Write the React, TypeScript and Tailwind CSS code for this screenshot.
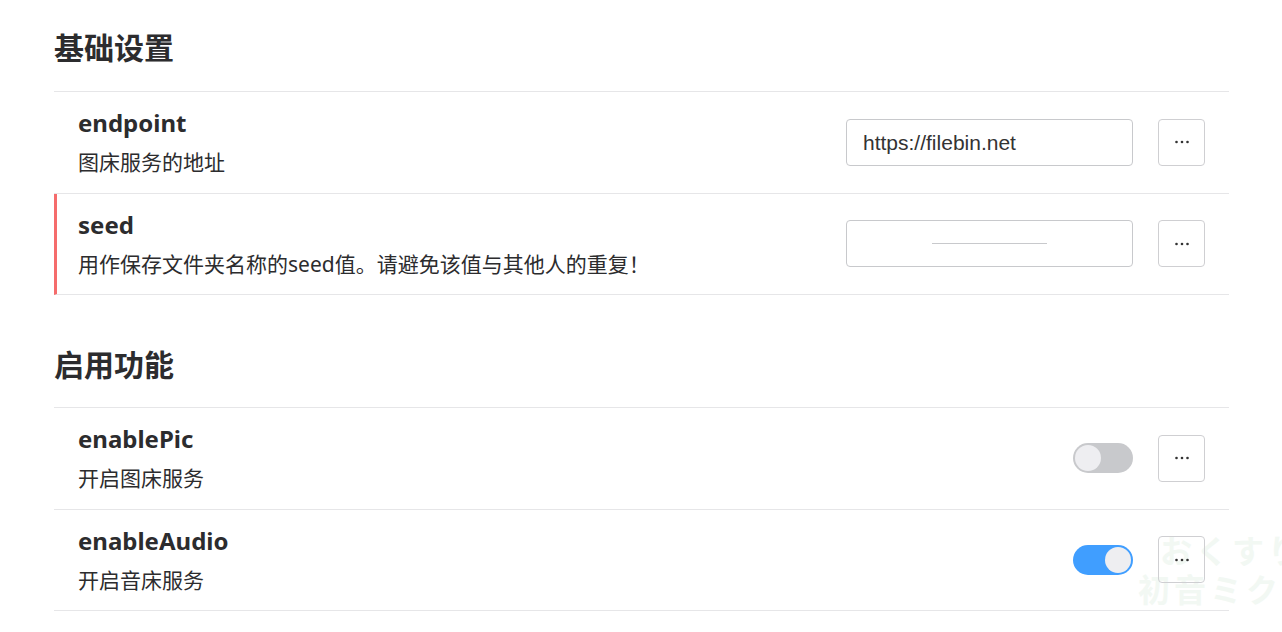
import React from "react";

const Dots = () => (
  <svg width="16" height="4" viewBox="0 0 16 4" className="block">
    <circle cx="2.5" cy="2" r="1.3" fill="#333" />
    <circle cx="8" cy="2" r="1.3" fill="#333" />
    <circle cx="13.5" cy="2" r="1.3" fill="#333" />
  </svg>
);

const MoreBtn = () => (
  <button className="w-[47px] h-[47px] rounded-[4px] border border-[#cfcfd2] bg-transparent flex items-center justify-center">
    <Dots />
  </button>
);

const Toggle = ({ on }: { on: boolean }) => (
  <div
    className={
      on
        ? "w-[60px] h-[30px] rounded-full bg-[#409eff] flex items-center justify-end px-[2px]"
        : "w-[60px] h-[30px] rounded-full bg-[#c8c9cc] flex items-center justify-start px-[2px]"
    }
  >
    <div className="w-[26px] h-[26px] rounded-full bg-[#eeeef1]" />
  </div>
);

const Row = ({
  title,
  desc,
  control,
  invalid,
}: {
  title: string;
  desc: string;
  control: React.ReactNode;
  invalid?: boolean;
}) => (
  <div
    className={
      invalid
        ? "flex items-center border-b border-[#e6e6e8] border-l-[3px] border-l-[#f56c6c] pl-[21px] pr-[24px] h-[101.5px]"
        : "flex items-center border-b border-[#e6e6e8] pl-[24px] pr-[24px] h-[101.5px]"
    }
  >
    <div className="flex-1 flex flex-col">
      <div className="text-[24px] leading-[32px] font-bold text-[#2c2c2e]">{title}</div>
      <div className="text-[21px] leading-[30px] mt-[8px] text-[#2c2c2e]">{desc}</div>
    </div>
    <div className="flex items-center gap-[25px]">
      {control}
      <MoreBtn />
    </div>
  </div>
);

export default function App() {
  return (
    <div
      className="relative w-[1282px] h-[632px] overflow-hidden bg-white pl-[54px] pr-[53px]"
      style={{ fontFamily: '"Noto Sans", "Noto Sans CJK SC", sans-serif' }}
    >
      <div
        className="absolute left-[1160px] top-[533px] text-[32px] leading-[36px] font-bold text-[#f2f8f3] whitespace-nowrap tracking-[4px] pointer-events-none"
        aria-hidden="true"
      >
        おくすり
      </div>
      <div
        className="absolute left-[1138px] top-[572px] text-[32px] leading-[36px] font-bold text-[#f2f8f3] whitespace-nowrap tracking-[4px] pointer-events-none"
        aria-hidden="true"
      >
        初音ミク
      </div>
      <div className="relative">
        <h2 className="pt-[28px] pb-[23px] text-[30px] leading-[40px] font-bold text-[#2c2c2e]">基础设置</h2>
        <div className="border-t border-[#e6e6e8]">
          <Row
            title="endpoint"
            desc="图床服务的地址"
            control={
              <div
                className="w-[287px] h-[47px] rounded-[4px] border border-[#c8c9cc] bg-white flex items-center pl-[16px] text-[21px] text-[#333]"
                style={{ fontFamily: '"Liberation Sans", Arial, sans-serif' }}
              >
                https://filebin.net
              </div>
            }
          />
          <Row
            title="seed"
            desc="用作保存文件夹名称的seed值。请避免该值与其他人的重复！"
            invalid
            control={
              <div className="w-[287px] h-[47px] rounded-[4px] border border-[#c8c9cc] bg-white flex items-center justify-center">
                <div className="w-[115px] h-px bg-[#c8c9cc]" />
              </div>
            }
          />
        </div>
        <h2 className="pt-[50px] pb-[22px] text-[30px] leading-[40px] font-bold text-[#2c2c2e]">启用功能</h2>
        <div className="border-t border-[#e6e6e8]">
          <Row title="enablePic" desc="开启图床服务" control={<Toggle on={false} />} />
          <Row title="enableAudio" desc="开启音床服务" control={<Toggle on={true} />} />
        </div>
      </div>
    </div>
  );
}
